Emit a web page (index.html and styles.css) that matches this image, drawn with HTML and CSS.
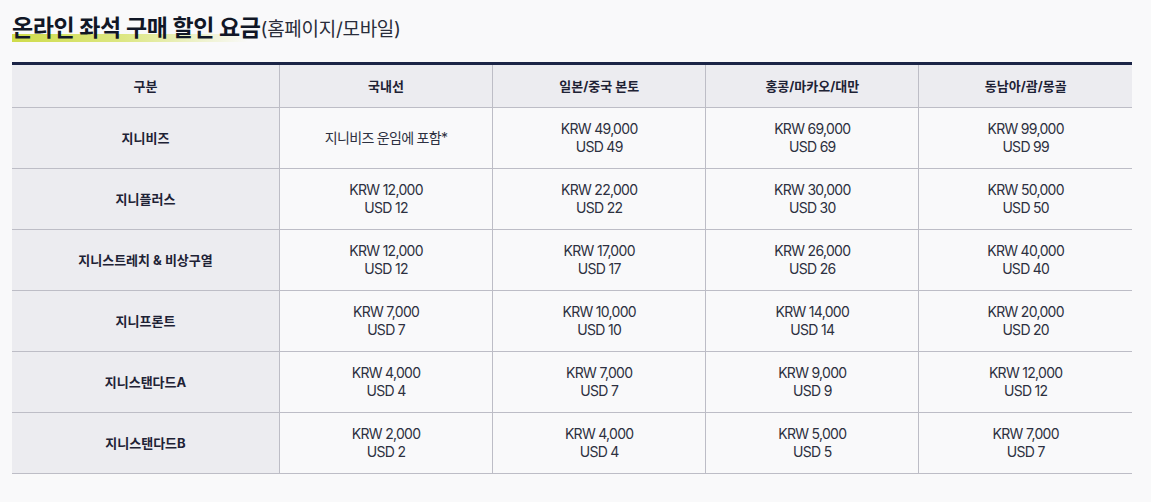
FILE: index.html
```html
<!DOCTYPE html>
<html lang="ko">
<head>
<meta charset="utf-8">
<link rel="stylesheet" href="styles.css">
</head>
<body>
<div class="page">
  <h2 class="title"><span class="hl">온라인 좌석 구매 할인 요금</span><span class="sub">(홈페이지/모바일)</span></h2>
  <table class="fare">
    <thead>
      <tr>
        <th class="c0">구분</th>
        <th>국내선</th>
        <th>일본/중국 본토</th>
        <th>홍콩/마카오/대만</th>
        <th>동남아/괌/몽골</th>
      </tr>
    </thead>
    <tbody>
      <tr>
        <th>지니비즈</th>
        <td>지니비즈 운임에 포함*</td>
        <td>KRW 49,000<br>USD 49</td>
        <td>KRW 69,000<br>USD 69</td>
        <td>KRW 99,000<br>USD 99</td>
      </tr>
      <tr>
        <th>지니플러스</th>
        <td>KRW 12,000<br>USD 12</td>
        <td>KRW 22,000<br>USD 22</td>
        <td>KRW 30,000<br>USD 30</td>
        <td>KRW 50,000<br>USD 50</td>
      </tr>
      <tr>
        <th>지니스트레치 &amp; 비상구열</th>
        <td>KRW 12,000<br>USD 12</td>
        <td>KRW 17,000<br>USD 17</td>
        <td>KRW 26,000<br>USD 26</td>
        <td>KRW 40,000<br>USD 40</td>
      </tr>
      <tr>
        <th>지니프론트</th>
        <td>KRW 7,000<br>USD 7</td>
        <td>KRW 10,000<br>USD 10</td>
        <td>KRW 14,000<br>USD 14</td>
        <td>KRW 20,000<br>USD 20</td>
      </tr>
      <tr>
        <th>지니스탠다드A</th>
        <td>KRW 4,000<br>USD 4</td>
        <td>KRW 7,000<br>USD 7</td>
        <td>KRW 9,000<br>USD 9</td>
        <td>KRW 12,000<br>USD 12</td>
      </tr>
      <tr>
        <th>지니스탠다드B</th>
        <td>KRW 2,000<br>USD 2</td>
        <td>KRW 4,000<br>USD 4</td>
        <td>KRW 5,000<br>USD 5</td>
        <td>KRW 7,000<br>USD 7</td>
      </tr>
    </tbody>
  </table>
</div>
</body>
</html>
```

FILE: styles.css
```css
html, body {
  margin: 0;
  padding: 0;
  background: #f9f9fa;
}
body {
  font-family: "Inter", "Noto Sans CJK KR", sans-serif;
  color: #2a2d3a;
}
.page {
  padding: 12px 19px 0 12px;
}
.title {
  margin: 0;
  height: 32px;
  font-size: 23px;
  font-weight: 700;
  line-height: 32px;
  color: #111726;
  letter-spacing: -0.4px;
}
.hl {
  background: linear-gradient(90deg, #cfdc4a 0%, #dde784 45%, rgba(240, 244, 215, 0) 95%) no-repeat;
  background-size: 100% 8px;
  background-position: 0 20px;
}
.sub {
  font-size: 19px;
  font-weight: 400;
  color: #2a2d3a;
  letter-spacing: -0.3px;
}
.fare {
  margin-top: 18px;
  width: 1120px;
  border-collapse: collapse;
  border-top: 3px solid #1b2446;
  table-layout: fixed;
  font-size: 14px;
  line-height: 18px;
}
.fare th, .fare td {
  border: 1px solid #bdbdc6;
  text-align: center;
  vertical-align: middle;
  padding: 0;
}
.fare tr > :first-child { border-left: none; }
.fare tr > :last-child { border-right: none; }
.fare thead th {
  border-top: none;
  height: 42px;
  background: #ececf0;
  font-weight: 700;
  font-size: 13px;
  color: #1e2235;
}
.fare .c0 { width: 267px; }
.fare tbody th {
  height: 60px;
  background: #ececf0;
  font-weight: 700;
  font-size: 13px;
  color: #1e2235;
}
.fare tbody td {
  background: #f9f9fa;
  color: #2d3040;
  letter-spacing: -0.7px;
}
```
